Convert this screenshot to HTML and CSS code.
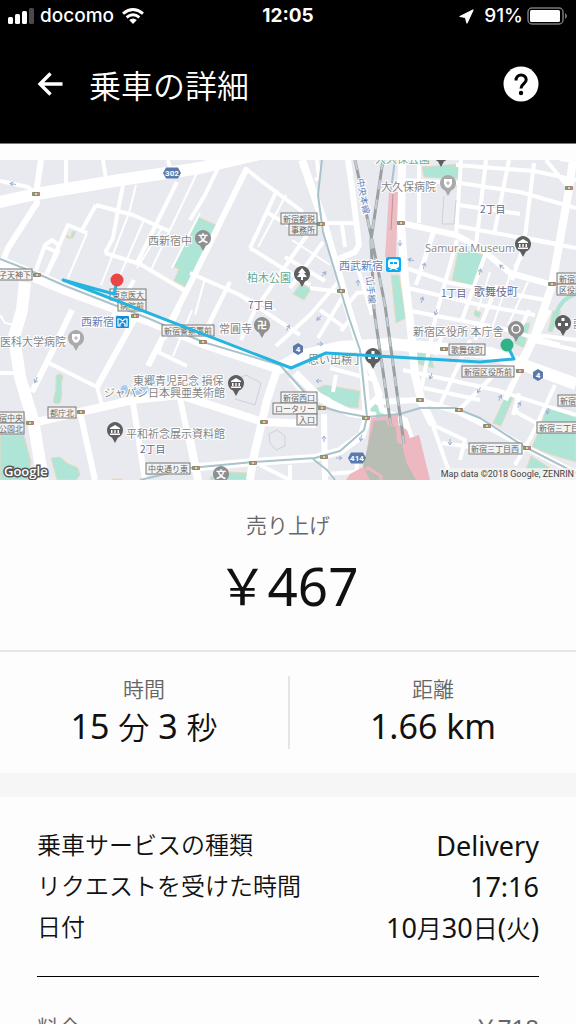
FILE: index.html
```html
<!DOCTYPE html>
<html lang="ja">
<head>
<meta charset="utf-8">
<meta name="viewport" content="width=device-width, initial-scale=1">
<title>乗車の詳細</title>
<link rel="stylesheet" href="styles.css">
</head>
<body>
<header class="header">
  <div class="status">
    <div class="status-side">
      <svg class="signal" viewBox="0 0 26 16" aria-hidden="true"><g fill="#fff"><rect x="0" y="9" width="5" height="7" rx="1.5"/><rect x="7" y="6" width="5" height="10" rx="1.5"/><rect x="14" y="3" width="5" height="13" rx="1.5"/><rect x="21" y="0" width="5" height="16" rx="1.5" fill="#4a4a4a"/></g></svg>
      <span>docomo</span>
      <svg class="wifi" viewBox="0 0 22 16" aria-hidden="true"><g fill="none" stroke="#fff" stroke-width="2.8"><path d="M1 5.600Q11-2.600 21 5.600"/><path d="M4.600 9.400Q11 4 17.400 9.400"/></g><path d="M7.200 12Q11 9 14.800 12L11 16Z" fill="#fff"/></svg>
    </div>
    <span class="clock">12:05</span>
    <div class="status-side status-end">
      <svg class="locate" viewBox="0 0 15 15" aria-hidden="true"><path d="M14 1L8 14L6.500 8.500L1 7.500Z" fill="#fff" stroke="#fff" stroke-width="1.200" stroke-linejoin="round"/></svg>
      <span>91%</span>
      <svg class="battery" viewBox="0 0 41 18" aria-hidden="true"><rect x="1" y="1" width="35" height="16" rx="4" fill="none" stroke="#777" stroke-width="1.500"/><rect x="3" y="3" width="30" height="12" rx="1.500" fill="#fff"/><path d="M38 6Q42 9 38 12Z" fill="#777"/></svg>
    </div>
  </div>
  <div class="titlebar">
    <button class="icon-button" type="button" aria-label="戻る"><svg class="back" viewBox="0 0 26 24" aria-hidden="true"><path d="M13.500 1.500L3 12L13.500 22.500M3 12H25.500" fill="none" stroke="#fff" stroke-width="3.400"/></svg></button>
    <h1 class="title">乗車の詳細</h1>
    <button class="icon-button" type="button" aria-label="ヘルプ"><svg class="help" viewBox="0 0 36 36" aria-hidden="true"><circle cx="18" cy="18" r="17.500" fill="#fff"/><path d="M13 14.500C13 7.300 23.200 7.500 23.200 13.800C23.200 18 18 17.600 18 22.500" fill="none" stroke="#000" stroke-width="3"/><circle cx="18" cy="27" r="2.200"/></svg></button>
  </div>
</header>

<main>
<svg class="map" viewBox="0 0 576 320" role="img" aria-label="乗車ルートの地図">
  <defs>
    <g id="pin"><path d="M0 13L-3 7.500A8 8 0 1 1 3 7.500Z"/></g>
    <g id="museum" fill="#fff"><path d="M-5-2L0-5L5-2V-1H-5ZM-4 0H-2.500V3H-4ZM-.7 0H.7V3H-.7ZM2.500 0H4V3H2.500ZM-5 3.500H5V5H-5Z"/></g>
    <g id="shield"><path d="M-4-4H4V1Q3 4 0 5Q-3 4-4 1Z" fill="#fff"/><path d="M-2 0H2M0-2V2" stroke="#aaa"/></g>
    <g id="light"><rect x="-4" y="-2" width="8" height="4" rx="1" fill="#8a8371"/><circle cx="-2.300" r="1.200" fill="#79a77b"/><circle r="1.200" fill="#ead78e"/><circle cx="2.300" r="1.200" fill="#db8381"/></g>
    <path id="arrow" d="M-3 0H3M0-2L3 0L0 2"/>
    <path id="hex" d="M-9 0L-6-5.500H6L9 0L6 5.500H-6Z"/>
  </defs>
  <rect width="576" height="320" fill="#e9eaef"/>

  <g class="park">
    <path d="M198 57L216 65L188 128L174 121L179 109L173 107Z"/>
    <path d="M66 75L71 77L72 72L76 71L73 78L67 78Z"/>
    <path d="M422 7L459 4V19L424 17Z"/><path d="M458 92Q468 89 483 95L476 127L452 120Z"/>
    <path d="M391 115H399L406 158L396 163Z"/><path d="M301 123L311 129L304 140L293 134Z"/>
    <path d="M0 275H24L31 302L28 320H0Z"/><path d="M51 298L60 297L67 303L78 308L80 315L76 320H57Z"/>
    <path d="M56 216Q60 212 63 216Q60 225 62 234L60 243Q56 245 53 242Q57 230 56 216Z"/>
    <path d="M315 229L325 225L360 231L358 248L337 246Q328 238 315 229Z"/><path d="M371 245H384V257L372 258Z"/>
    <path d="M210 317L231 312L249 313V320H210Z"/><path d="M112 319H122V320H112Z"/>
    <path d="M412 193L429 190L434 208L414 203Z"/><path d="M514 164L530 163L524 188L514 183Z"/>
    <path d="M507 233L514 236L501 266L493 263Z"/>
    <path d="M546 243L576 256V302L552 295L532 287L542 264Z"/><path d="M531 296L550 308L540 315L526 309Z"/>
    <path d="M553 151L561 151L552 172L548 171Z"/><path d="M366 246L385 244V258H366ZM475 150L481 153L479 158L474 155Z"/>
  </g>
  <path d="M556 155Q560 139 576 134" fill="none" stroke="#aee3d4" stroke-width="4"/>

  <g class="road thin">
    <path d="M136 25L129 53L101 125M143 62L118 120M197 13L150 112M87 73L68 118M162 68L137 108M200 53L172 108M205 118L195 155M60 90L46 118"/>
    <path d="M286 35L258 87M268 53L280 60M240 135L276 150M292 80L330 105M222 140L210 165M180 150L165 180M192 150L173 196"/>
    <path d="M0 155L5 163L14 165M435 72L419 120M457 80L436 152M490 112L478 150M510 115L492 168M528 122L508 165M560 0L576 2"/>
  </g>
  <g class="road small">
    <path d="M0 21L28 27L35 34M66 0V25M103 0L106 19M168 0L171 12M123 25L118 50L113 78L105 93M96 45L133 55L169 71M96 45L82 70M87 73L68 65L46 115M36 110L45 85L52 80L60 86M45 87L57 92M177 22L137 103M105 93L140 104L187 132M134 120L112 158"/>
    <path d="M218 8L205 35L190 60M245 8L260 20L303 52M277 30L250 88M250 88L310 125M307 75L255 150L241 180M323 82L290 128M285 97L325 121M268 53L300 72M190 113L240 135L300 175M340 120L310 155L276 186M345 133L318 178M230 122L203 175M310 128L348 133M320 150L345 168M341 171L352 157"/>
    <path d="M320 63H357M342 65L345 87M357 105L372 155M315 20L319 18L317 0M348 144L357 133L374 131"/>
    <path d="M0 213H18M47 202L97 227L102 245M168 165L158 192L187 206M158 192L166 170"/>
    <path d="M402 20L460 23L520 32L576 48M456 5L534 11L576 20M459 45L520 54M457 66L576 88M527 78L557 84M461 0L456 75M486 0L476 85M509 0L494 75M534 3L524 85L512 120M546 0L569 28M419 0V63M524 92L515 107"/>
    <path d="M406 108L450 123L545 140M408 128L480 145L535 155M411 151L490 166M433 72L416 125M457 80L436 155L419 240M485 95L462 160M470 180L440 245M502 207L459 250M519 233L513 255M443 170L436 195M497 125L475 180M403 210L496 230L576 255M424 228L480 240M425 250L433 265L465 280L460 300M433 266L452 320M442 283L515 293M519 233L516 252L540 265M555 225L532 275L515 305M500 168L560 185M530 180L576 190M529 150L515 180M537 175L576 180"/>
    <path d="M330 208L375 220M336 215L333 232M330 240L310 230M290 218L315 247M192 280L200 320M260 305L290 320M290 305V320M355 320L358 298M326 314L354 312"/>
  </g>
  <g class="road mid">
    <path d="M41 0L36 34L37 43L8 88L0 108M247 8L188 128L148 206M72 150L47 202L32 232M135 158L97 227M80 252L95 320M133 243L145 320M180 238L197 320"/>
    <path d="M348 0L353 35L359 85L355 92L336 100M401 63L456 75L480 88L510 113L549 124M376 242L419 240L459 252L487 266L527 288L576 313M367 200L380 235L364 251M324 254L325 320M549 150L522 205L505 240"/>
    <path d="M376 225L382 250L405 260L425 320"/>
  </g>
  <g class="road large">
    <path d="M302 0L323 60L348 148L362 195L367 257M402 0L401 65L405 120L411 170L415 215L422 243L433 265M573 0L569 29L552 125L535 175L520 205M33 263L80 252L133 240L180 235L195 240L263 262L316 264M278 207L267 240L253 300L250 320M190 308L253 302L315 298L340 291L362 275L367 258M295 213L320 238L350 253L376 256"/>
  </g>
  <g class="road main"><path d="M-5 43L36 34L120 20L200 8L260-6M0 102L63 128L150 160L203 182L280 208L300 196L340 187L390 184L490 193L576 224M25 122L22 150L14 177L20 217L33 260L43 320"/></g>

  <path d="M389 32H398L396 97H385Z" fill="#edbdc4"/><path d="M393 34L391 70" stroke="#c78e98"/>
  <path d="M371 258L398 254L398 265L407 270L410 278L419 275L430 320H346L350 314L365 306Z" fill="#edb8bf"/>
  <path d="M374 261L386 260L388 266L396 267L397 283L402 284L406 302L416 320H370L363 306Z" fill="#b9beb4"/>
  <path d="M366 310L368 308L381 316V320" fill="none" stroke="#edb8bf" stroke-width="3"/>

  <g class="subway">
    <path d="M0 99L36 113L63 125L150 159L203 182L280 205L316 245L340 252L367 257L400 254L420 248L455 248L480 258L525 287L576 313M322-1L318 35L323 72L348 155L360 190L367 257L364 270L340 291L315 298L253 302L190 308L140 320M313 299L327 310L335 320M395 0L391 30"/>
  </g>
  <g class="railway"><path d="M355 0L372 80L385 145L404 284M383 0L371 80L374 150L391 266"/></g>
  <g class="railway dash"><path d="M355 0L372 80L385 145L404 284M383 0L371 80L374 150L391 266"/></g>

  <g fill="none" stroke="#cfd1d7"><path d="M237 219L246 215L261 223L255 245L235 239M269 274L277 270L285 276V286L276 290L270 283ZM444 36L442 64H454L456 40"/></g>
  <g class="arrows">
    <use href="#arrow" transform="translate(13 24) rotate(190)"/><use href="#arrow" transform="translate(36 220) rotate(115)"/><use href="#arrow" transform="translate(324 114) rotate(-50)"/><use href="#arrow" transform="translate(358 123) rotate(-90)"/><use href="#arrow" transform="translate(400 83) rotate(90)"/><use href="#arrow" transform="translate(411 100) rotate(195)"/><use href="#arrow" transform="translate(424 106) rotate(-75)"/><use href="#arrow" transform="translate(422 140) rotate(-75)"/><use href="#arrow" transform="translate(436 152) rotate(105)"/><use href="#arrow" transform="translate(480 112) rotate(-75)"/><use href="#arrow" transform="translate(502 107) rotate(220)"/><use href="#arrow" transform="translate(288 168) rotate(-60)"/><use href="#arrow" transform="translate(319 158) rotate(135)"/><use href="#arrow" transform="translate(320 184)"/><use href="#arrow" transform="translate(319 221) rotate(180)"/><use href="#arrow" transform="translate(324 279) rotate(-90)"/><use href="#arrow" transform="translate(339 298)"/><use href="#arrow" transform="translate(361 278) rotate(100)"/><use href="#arrow" transform="translate(431 216) rotate(110)"/><use href="#arrow" transform="translate(479 230) rotate(120)"/><use href="#arrow" transform="translate(500 238) rotate(-65)"/><use href="#arrow" transform="translate(519 245) rotate(-65)"/><use href="#arrow" transform="translate(548 251) rotate(110)"/><use href="#arrow" transform="translate(450 282) rotate(90)"/>
  </g>
  <g>
    <use href="#light" x="36" y="34"/><use href="#light" x="37" y="115"/><use href="#light" x="135" y="156"/><use href="#light" x="321" y="64"/><use href="#light" x="341" y="131"/><use href="#light" x="401" y="63"/><use href="#light" x="569" y="28"/><use href="#light" x="552" y="124"/><use href="#light" x="30" y="263"/><use href="#light" x="81" y="252"/><use href="#light" x="196" y="308"/><use href="#light" x="203" y="182"/><use href="#light" x="264" y="262"/><use href="#light" x="322" y="248"/><use href="#light" x="366" y="258"/><use href="#light" x="324" y="297"/><use href="#light" x="253" y="303"/><use href="#light" x="444" y="189"/><use href="#light" x="520" y="211"/><use href="#light" x="420" y="240"/><use href="#light" x="459" y="250"/><use href="#light" x="487" y="266"/><use href="#light" x="527" y="288"/>
  </g>
  <path d="M121 233Q119 225 126 225L129 230L147 226L150 231L137 235Z" fill="#a3ccf5"/>

  <g fill="#8f8f8f"><use href="#pin" x="203" y="78"/><use href="#pin" x="262" y="165"/><use href="#pin" x="221" y="314"/><use href="#pin" x="516" y="169"/></g>
  <g fill="#aaa"><use href="#pin" x="448" y="23"/><use href="#pin" x="76" y="178"/></g>
  <g fill="#5e5e5e"><use href="#pin" x="302" y="114"/><use href="#pin" x="523" y="84"/><use href="#pin" x="236" y="223"/><use href="#pin" x="115" y="270"/><use href="#pin" x="373" y="196"/><use href="#pin" x="563" y="163"/><use href="#pin" x="441" y="-6"/></g>
  <use href="#museum" x="523" y="84"/><use href="#museum" x="236" y="223"/><use href="#museum" x="115" y="270"/>
  <use href="#shield" x="448" y="23"/><use href="#shield" x="76" y="178"/>
  <path d="M302 108L306 113H304L307 117H303V120H301V117H297L300 113H298Z" fill="#fff"/>
  <circle cx="516" cy="169" r="4" fill="none" stroke="#fff" stroke-width="1.500"/>
  <path d="M561.500 158H564.500V161H561.500ZM558 163H561V166H558ZM565 163H568V166H565ZM371.500 191H374.500V194H371.500ZM368 196H371V199H368ZM375 196H378V199H375Z" fill="#fff"/>
  <g class="pin-text"><text x="203" y="82">文</text><text x="221" y="318">文</text><text x="262" y="169">卍</text></g>

  <g class="place">
    <text x="148" y="85">西新宿中</text><text x="381" y="31">大久保病院</text><text x="425" y="92" class="latin">Samurai Museum</text>
    <text x="413" y="176">新宿区役所 本庁舎</text><text x="219" y="173">常圓寺</text><text x="0" y="186">医科大学病院</text>
    <text x="133" y="225">東郷青児記念 損保</text><text x="104" y="237">ジャパン日本興亜美術館</text><text x="126" y="278">平和祈念展示資料館</text><text x="308" y="204">思い出横丁</text><text x="573" y="169">歌</text>
  </g>
  <g class="place green"><text x="247" y="122">柏木公園</text><text x="375" y="3">大久保公園</text></g>
  <g class="place blue"><text x="339" y="110">西武新宿</text><text x="81" y="166">西新宿</text><text class="rail-name" transform="translate(357 19) rotate(80)">中央本線</text><text class="rail-name" transform="translate(366 117) rotate(84)">山手線</text></g>
  <g class="place district"><text x="248" y="149">7丁目</text><text x="480" y="53">2丁目</text><text x="441" y="137">1丁目</text><text x="140" y="293">2丁目</text><text class="town" x="474" y="136">歌舞伎町</text></g>

  <rect x="386" y="97" width="15" height="15" rx="2" fill="#08aaf2"/><path d="M391 99H396Q399 99 399 102V106Q399 108 396 108L398 110H396L395 109H392L391 110H389L391 108Q388 108 388 106V102Q388 99 391 99Z" fill="#fff"/><path d="M390 102H393V104H390ZM394 102H397V104H394Z" fill="#08aaf2"/>
  <rect x="116" y="156" width="13" height="12" rx="1" fill="#168bd0"/><path d="M118 159H120L122.500 161L125 159H127V166H125V164Q122.500 161 120 164V166H118Z" fill="none" stroke="#fff" stroke-width="1.200"/>
  <g fill="#5a7aac"><use href="#hex" x="172" y="13"/><use href="#hex" x="357" y="298"/><path d="M298 183L303 186V192L298 195L293 192V186ZM538 209L543 212V218L538 221L533 218V212Z"/></g>
  <g class="shield-text"><text x="172" y="16">302</text><text x="357" y="301">414</text><text x="298" y="192">4</text><text x="538" y="218">4</text></g>

  <g class="box">
    <rect x="-5" y="109" width="37" height="11"/><rect x="110" y="129" width="36" height="11"/><rect x="118" y="140" width="28" height="11"/><rect x="281" y="53" width="36" height="11"/><rect x="289" y="64" width="28" height="11"/>
    <rect x="557" y="113" width="36" height="11"/><rect x="557" y="124" width="28" height="11"/><rect x="162" y="165" width="52" height="11"/><rect x="-10" y="252" width="34" height="11"/><rect x="-10" y="263" width="34" height="11"/><rect x="48" y="247" width="28" height="11"/><rect x="146" y="303" width="44" height="11"/>
    <rect x="281" y="232" width="36" height="11"/><rect x="273" y="243" width="44" height="11"/><rect x="297" y="254" width="20" height="11"/><rect x="449" y="184" width="36" height="11"/><rect x="462" y="206" width="52" height="11"/><rect x="558" y="235" width="36" height="11"/><rect x="537" y="262" width="45" height="11"/><rect x="469" y="283" width="53" height="11"/>
  </g>
  <g class="box-text">
    <text x="15" y="118">子天神下</text><text x="128" y="138">東京医大</text><text x="132" y="149">病院前</text><text x="299" y="62">新宿都税</text><text x="303" y="73">事務所</text><text x="571" y="122">新宿区</text><text x="571" y="133">区役所</text><text x="188" y="174">新宿警察署前</text><text x="7" y="261">新宿中央</text><text x="11" y="272">公園北</text><text x="62" y="256">都庁北</text><text x="168" y="312">中央通り東</text><text x="299" y="241">新宿西口</text><text x="295" y="252">ロータリー</text><text x="307" y="263">入口</text><text x="467" y="193">歌舞伎町</text><text x="488" y="215">新宿区役所前</text><text x="576" y="244">新宿三丁</text><text x="559" y="271">新宿三丁目</text><text x="495" y="292">新宿三丁目西</text>
  </g>

  <path d="M117 121L114 134L63 120L291 208L326 193L480 202L514 199L507 185" fill="none" stroke="#25b3df" stroke-width="3" stroke-linejoin="round"/>
  <circle cx="117" cy="120" r="6.500" fill="#e84646"/><circle cx="507" cy="185" r="6.500" fill="#30b287"/>
  <rect x="440" y="308" width="136" height="12" fill="#f4f4f4" opacity=".75"/>
  <text class="google" x="4" y="316">Google</text>
  <text class="credit" x="574" y="317">Map data ©2018 Google, ZENRIN</text>
</svg>

<section class="earnings">
  <h2 class="caption">売り上げ</h2>
  <p class="amount"><span class="yen">￥</span>467</p>
</section>

<section class="stats">
  <div class="stat"><h2 class="caption">時間</h2><p class="figure">15 <span class="unit">分</span> 3 <span class="unit">秒</span></p></div>
  <div class="stat"><h2 class="caption">距離</h2><p class="figure">1.66 km</p></div>
</section>

<section class="details">
  <dl class="list">
    <div class="row"><dt>乗車サービスの種類</dt><dd>Delivery</dd></div>
    <div class="row"><dt>リクエストを受けた時間</dt><dd>17:16</dd></div>
    <div class="row"><dt>日付</dt><dd>10<span class="kanji">月</span>30<span class="kanji">日</span>(<span class="kanji">火</span>)</dd></div>
  </dl>
  <dl class="list fare">
    <div class="row"><dt>料金</dt><dd><span class="kanji">￥</span>718</dd></div>
  </dl>
</section>
</main>
</body>
</html>
```
FILE: styles.css
```css
* { box-sizing: border-box; }
body { margin: 0; background: #fdfdfd; color: #111; font-family: "Noto Sans", "Noto Sans CJK JP", sans-serif; }
h1, h2, p, dl, dd { margin: 0; font-weight: 400; }
svg { display: block; flex: none; }

.header { background: #000; color: #fff; border-bottom: 1px solid #777; }
.status { display: grid; grid-template-columns: 1fr auto 1fr; align-items: center; height: 32px; padding: 0 8px; font: 500 19px/32px Inter, sans-serif; }
.status-side { display: flex; align-items: center; gap: 6px; }
.status-end { justify-content: flex-end; gap: 4px; }
.clock { font-weight: 700; }
.signal { width: 26px; height: 16px; }
.wifi { width: 22px; height: 16px; margin-left: 2px; }
.locate { width: 15px; height: 15px; margin-right: 6px; }
.battery { width: 41px; height: 18px; }

.titlebar { display: flex; align-items: center; height: 111px; padding: 0 37px 8px 36px; }
.icon-button { padding: 0; border: 0; background: none; }
.back { width: 28px; height: 24px; }
.help { width: 36px; height: 36px; }
.title { flex: 1; margin-left: 25px; font: 350 32px/44px "Noto Sans CJK JP", sans-serif; }

.map { width: 100%; height: auto; margin-top: 16px; }
.park { fill: #afe5d6; stroke: #ead9bd; stroke-width: 1; }
.road { fill: none; stroke: #fff; stroke-linejoin: round; }
.thin { stroke-width: 2; }
.small { stroke-width: 4; }
.mid { stroke-width: 6; }
.large { stroke-width: 8; }
.main { stroke-width: 12; }
.subway { fill: none; stroke: #a9c3cc; stroke-width: 2; stroke-linejoin: round; }
.railway { fill: none; stroke: #9a9fa3; stroke-width: 3; }
.dash { stroke: #bfcdd2; stroke-width: 2; stroke-dasharray: 10 10; }
.arrows { fill: none; stroke: #9fb0d4; stroke-width: 1; }
.place { fill: #858585; stroke: #fff; stroke-width: 2; paint-order: stroke; font: 400 11px "Noto Sans CJK JP", sans-serif; }
.latin { font: 400 11px "Open Sans", sans-serif; }
.green { fill: #5fa892; }
.blue { fill: #6480b8; }
.rail-name { font-size: 9px; }
.district { fill: #62698f; font-size: 10px; }
.town { font-size: 11px; }
.pin-text { fill: #fff; text-anchor: middle; font: 700 10px "Noto Sans CJK JP", sans-serif; }
.shield-text { fill: #fff; text-anchor: middle; font: 700 8px Roboto, sans-serif; }
.box { fill: #f3f3f3; stroke: #777; stroke-width: 1; }
.box-text { fill: #666; text-anchor: middle; font: 400 8px "Noto Sans CJK JP", sans-serif; }
.google { fill: #fff; stroke: #555; stroke-width: 3; paint-order: stroke; font: 600 13px "Open Sans", sans-serif; }
.credit { fill: #444; text-anchor: end; font: 400 9px Roboto, sans-serif; }

.caption { color: #666; font: 350 21px/32px "Noto Sans CJK JP", sans-serif; }
.earnings { padding: 28px 0 26px; border-bottom: 2px solid #e5e5e5; text-align: center; }
.amount { display: flex; align-items: center; justify-content: center; margin-top: 8px; font-size: 53px; line-height: 76px; }
.yen { font: 400 50px/70px "Noto Sans CJK JP", sans-serif; padding-bottom: 6px; }

.stats { display: grid; grid-template-columns: 1fr 1fr; padding: 24px 0; border-bottom: 24px solid #f6f6f6; text-align: center; }
.stat { height: 73px; }
.stat + .stat { border-left: 2px solid #e5e5e5; }
.stat .caption { line-height: 24px; }
.figure { margin-top: 4px; font-size: 34px; line-height: 44px; }
.unit { font: 350 31px/42px "Noto Sans CJK JP", sans-serif; }

.details { padding: 28px 37px; }
.row { display: flex; justify-content: space-between; height: 41px; align-items: center; }
.row dt { padding-bottom: 4px; font: 350 24px/36px "Noto Sans CJK JP", sans-serif; }
.row dd { font-size: 27px; line-height: 41px; }
.kanji { font: 350 25px/36px "Noto Sans CJK JP", sans-serif; }
.fare { margin-top: 28px; padding-top: 30px; border-top: 1px solid #000; color: #666; }
.fare dt { font-size: 22px; }
.fare dd { font-size: 24px; }
.fare .kanji { font-size: 24px; }
```
